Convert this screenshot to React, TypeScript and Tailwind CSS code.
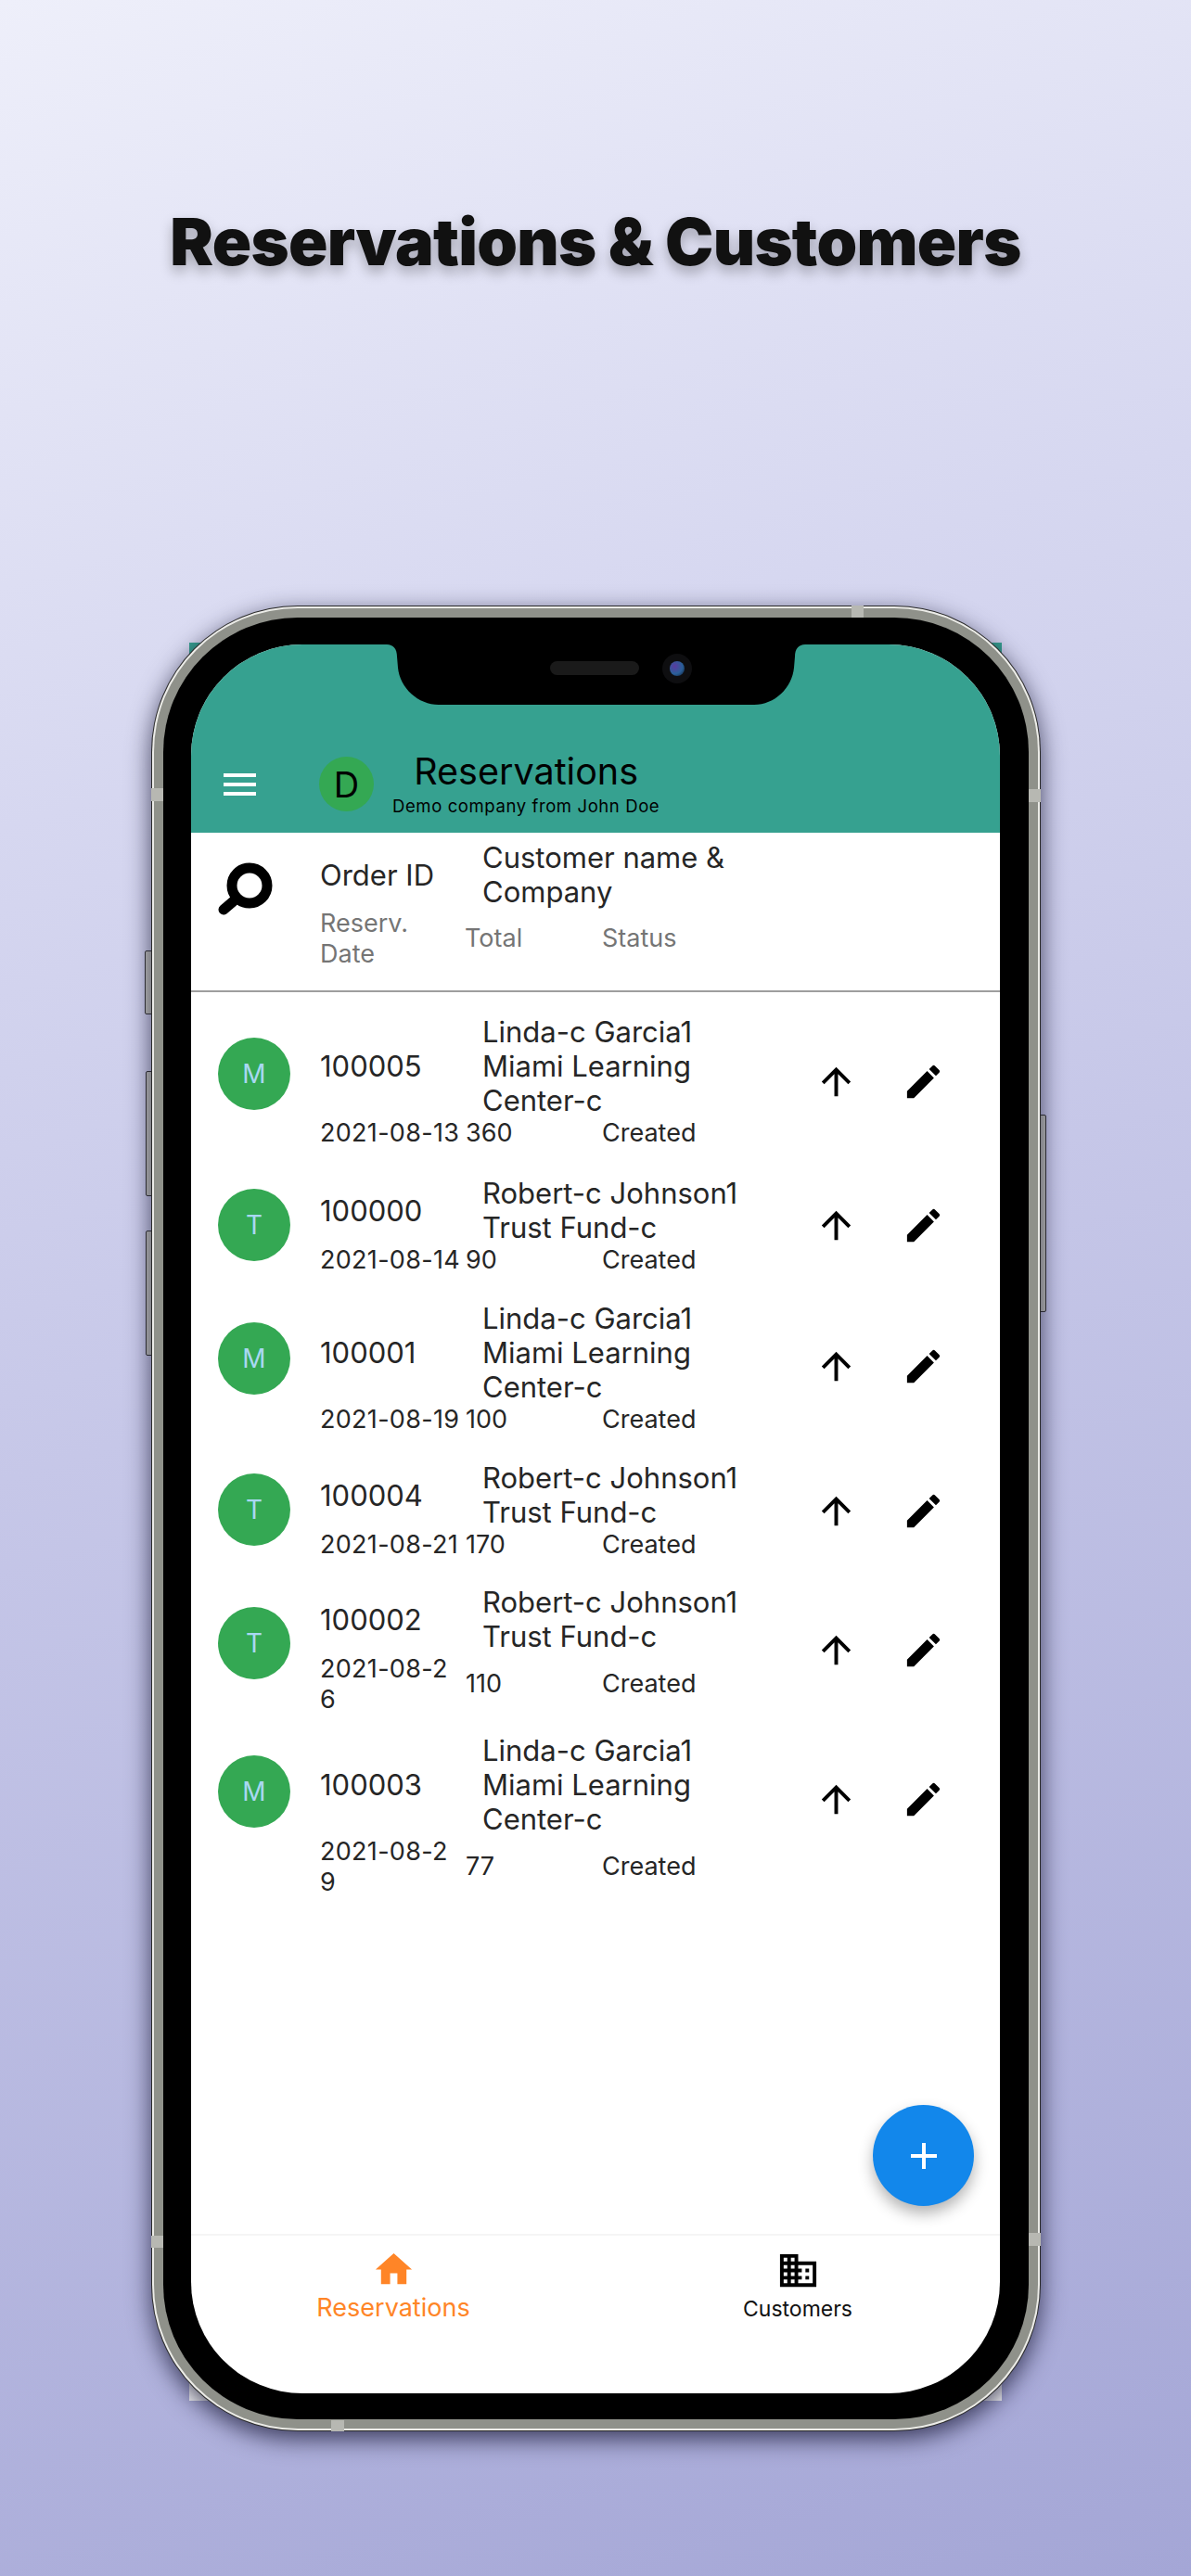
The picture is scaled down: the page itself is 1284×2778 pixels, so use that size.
const rows = [
  { id: '100005', avatar: 'M', names: ['Linda-c Garcia1', 'Miami Learning', 'Center-c'], date: ['2021-08-13'], total: '360', h: 'h-[174px]', am: 'mt-[25px]', im: 'mt-[49px]', nh: 'h-[111px]' },
  { id: '100000', avatar: 'T', names: ['Robert-c Johnson1', 'Trust Fund-c'], date: ['2021-08-14'], total: '90', h: 'h-[135px]', am: 'mt-[14px]', im: 'mt-[30px]', nh: 'h-[74px]' },
  { id: '100001', avatar: 'M', names: ['Linda-c Garcia1', 'Miami Learning', 'Center-c'], date: ['2021-08-19'], total: '100', h: 'h-[172px]', am: 'mt-[23px]', im: 'mt-[47px]', nh: 'h-[111px]' },
  { id: '100004', avatar: 'T', names: ['Robert-c Johnson1', 'Trust Fund-c'], date: ['2021-08-21'], total: '170', h: 'h-[134px]', am: 'mt-[14px]', im: 'mt-[31px]', nh: 'h-[74px]' },
  { id: '100002', avatar: 'T', names: ['Robert-c Johnson1', 'Trust Fund-c'], date: ['2021-08-2', '6'], total: '110', h: 'h-[160px]', am: 'mt-[24px]', im: 'mt-[47px]', nh: 'h-[74px]' },
  { id: '100003', avatar: 'M', names: ['Linda-c Garcia1', 'Miami Learning', 'Center-c'], date: ['2021-08-2', '9'], total: '77', h: 'h-[177px]', am: 'mt-[24px]', im: 'mt-[48px]', nh: 'h-[111px]' },
];

function Row({ r }: { r: (typeof rows)[number] }) {
  return (
    <div className={`flex items-start pl-[29px] ${r.h}`}>
      <div className={`flex h-[78px] w-[78px] shrink-0 items-center justify-center rounded-full bg-[#34a853] text-[28px] leading-none text-[#a9d8f2] ${r.am}`}>
        {r.avatar}
      </div>
      <div className="ml-[32px] w-[533px] shrink-0">
        <div className="flex items-center">
          <div className="w-[175px] shrink-0 text-[31px] leading-[37px] text-[#262626]">{r.id}</div>
          <div className={`flex flex-col justify-center text-[31px] leading-[37px] text-[#262626] ${r.nh}`}>
            {r.names.map((n) => (
              <div key={n}>{n}</div>
            ))}
          </div>
        </div>
        <div className="mt-[1px] flex items-center text-[27px] leading-[32.5px] text-[#262626]">
          <div className="w-[157px] shrink-0 tracking-[0.3px] whitespace-nowrap">
            {r.date.map((d) => (
              <div key={d}>{d}</div>
            ))}
          </div>
          <div className="w-[147px] shrink-0">{r.total}</div>
          <div>Created</div>
        </div>
      </div>
      <div className={`flex gap-[47px] ${r.im}`}>
        <svg viewBox="0 0 24 24" className="h-[47px] w-[47px]" fill="#000">
          <path d="M4 12l1.41 1.41L11 7.83V20h2V7.83l5.58 5.59L20 12l-8-8-8 8z" />
        </svg>
        <svg viewBox="0 0 24 24" className="h-[47px] w-[47px]" fill="#000">
          <path d="M3 17.25V21h3.75L17.81 9.94l-3.75-3.75L3 17.25zM20.71 7.04c.39-.39.39-1.02 0-1.41l-2.34-2.34c-.39-.39-1.02-.39-1.41 0l-1.83 1.83 3.75 3.75 1.83-1.83z" />
        </svg>
      </div>
    </div>
  );
}

export default function App() {
  return (
    <div className="min-h-[2778px] w-[1284px] overflow-hidden bg-[linear-gradient(162deg,#eeeffa_0%,#d6d7f0_28%,#c6c7e8_50%,#a4a6d6_100%)] font-['Inter','Liberation_Sans',sans-serif]">
      <div className="flex h-[653px] justify-center pt-[217px]">
        <h1 className="text-[70px] leading-[88px] font-black tracking-[-0.7px] whitespace-nowrap text-[#111] [text-shadow:0_7px_14px_rgba(0,0,0,0.28)]">
          Reservations &amp; Customers
        </h1>
      </div>

      <div className="relative ml-[163px] h-[1969px] w-[959px]">
        {/* screen picture corners poking out behind the frame */}
        <div className="absolute top-[40px] left-[41px] flex h-[1896px] w-[876px] flex-col">
          <div className="h-[200px] bg-[#36a190]" />
          <div className="flex-1 bg-white" />
        </div>

        {/* side buttons */}
        <div className="absolute top-[372px] -left-[7px] h-[69px] w-[8px] rounded-l-[2px] border border-[#333] bg-[#c5c6bf]" />
        <div className="absolute top-[502px] -left-[6px] h-[135px] w-[7px] rounded-l-[2px] border border-[#333] bg-[#c5c6bf]" />
        <div className="absolute top-[674px] -left-[6px] h-[135px] w-[7px] rounded-l-[2px] border border-[#333] bg-[#c5c6bf]" />
        <div className="absolute top-[549px] -right-[6px] h-[213px] w-[7px] rounded-r-[2px] border border-[#333] bg-[#c5c6bf]" />

        {/* frame */}
        <div className="relative h-full w-full rounded-[158px] bg-[#2b2b2b] p-px shadow-[0_8px_26px_rgba(20,20,50,0.75)]">
          <div className="h-full rounded-[157px] bg-[#ecece8] p-[2px]">
            <div className="h-full rounded-[155px] bg-[#8f918a] p-[10px]">
              <div className="relative h-full rounded-[145px] bg-black px-[30px] pt-[29px] pb-[29px]">
                <div className="relative flex h-[1886px] w-[872px] flex-col overflow-hidden rounded-[120px] bg-white">
                  {/* app bar */}
                  <div className="flex h-[203px] shrink-0 items-end bg-[#36a190] pb-[17px]">
                    <div className="flex items-center pl-[35px]">
                      <div className="flex w-[35px] flex-col gap-[6px]">
                        <div className="h-[4px] bg-white" />
                        <div className="h-[4px] bg-white" />
                        <div className="h-[4px] bg-white" />
                      </div>
                      <div className="ml-[68px] flex h-[59px] w-[59px] items-center justify-center rounded-full bg-[#34a853] text-[38px] leading-none text-black">
                        D
                      </div>
                      <div className="ml-[20px] flex flex-col items-center text-black">
                        <div className="text-[39.5px] leading-[44px]">Reservations</div>
                        <div className="mt-[3px] text-[18.5px] leading-[24px] tracking-[0.6px]">Demo company from John Doe</div>
                      </div>
                    </div>
                  </div>

                  {/* table header */}
                  <div className="flex h-[172px] shrink-0 items-start border-b-2 border-[#9e9e9e] pl-[29px]">
                    <svg viewBox="0 0 59 57" className="mt-[32px] h-[57px] w-[59px]" fill="none" stroke="#000">
                      <circle cx="34" cy="25" r="19" strokeWidth="11" />
                      <line x1="20" y1="39" x2="6" y2="51" strokeWidth="11" strokeLinecap="round" />
                    </svg>
                    <div className="ml-[51px] pt-[8px]">
                      <div className="flex items-center text-[31px] leading-[37px] text-[#262626]">
                        <div className="w-[175px]">Order ID</div>
                        <div className="w-[300px]">
                          <div>Customer name &amp;</div>
                          <div>Company</div>
                        </div>
                      </div>
                      <div className="flex items-center text-[27px] leading-[32.5px] text-[#757575]">
                        <div className="w-[156px]">
                          <div>Reserv.</div>
                          <div>Date</div>
                        </div>
                        <div className="w-[148px]">Total</div>
                        <div>Status</div>
                      </div>
                    </div>
                  </div>

                  {/* rows */}
                  <div className="flex-1 pt-[24px]">
                    {rows.map((r) => (
                      <Row key={r.id} r={r} />
                    ))}
                  </div>

                  {/* bottom nav */}
                  <div className="grid h-[172px] shrink-0 grid-cols-2 border-t-2 border-[#f5f5f5]">
                    <div className="flex flex-col items-center pt-[13px]">
                      <svg viewBox="0 0 24 24" className="h-[47px] w-[47px]" fill="#ff8527">
                        <path d="M10 20v-6h4v6h5v-8h3L12 3 2 12h3v8z" />
                      </svg>
                      <div className="mt-[2px] text-[27px] leading-[32px] text-[#ff8527]">Reservations</div>
                    </div>
                    <div className="flex flex-col items-center pt-[14px]">
                      <svg viewBox="0 0 24 24" className="h-[47px] w-[47px]" fill="#000">
                        <path d="M12 7V3H2v18h20V7H12zM6 19H4v-2h2v2zm0-4H4v-2h2v2zm0-4H4V9h2v2zm0-4H4V5h2v2zm4 12H8v-2h2v2zm0-4H8v-2h2v2zm0-4H8V9h2v2zm0-4H8V5h2v2zm10 12h-8v-2h2v-2h-2v-2h2v-2h-2V9h8v10zm-2-8h-2v2h2v-2zm0 4h-2v2h2v-2z" />
                      </svg>
                      <div className="mt-[3px] text-[23px] leading-[30px] text-[#111]">Customers</div>
                    </div>
                  </div>

                  {/* FAB */}
                  <div className="absolute right-[28px] bottom-[202px] flex h-[109px] w-[109px] items-center justify-center rounded-full bg-[#1287eb] shadow-[0_8px_16px_rgba(0,0,0,0.3)]">
                    <svg viewBox="0 0 28 28" className="h-[28px] w-[28px]" fill="#fff">
                      <path d="M12 0h4v12h12v4H16v12h-4V16H0v-4h12z" />
                    </svg>
                  </div>
                </div>

                {/* notch */}
                <svg viewBox="0 0 451 65" className="absolute top-[29px] left-[241px] h-[65px] w-[451px]" fill="#000">
                  <path d="M0 0C7 0 11 5 11 13L12 25C14 47 34 65 56 65H396C418 65 437 47 439 25L440 13C440 5 444 0 451 0Z" />
                </svg>
                <div className="absolute top-[47px] left-[417px] h-[15px] w-[96px] rounded-full bg-[#1a1a1a]" />
                <div className="absolute top-[39px] left-[538px] flex h-[32px] w-[32px] items-center justify-center rounded-full bg-[#0e0e10]">
                  <div className="h-[16px] w-[16px] rounded-full bg-[radial-gradient(circle_at_35%_35%,#5a3aa0,#2a5f98_55%,#0c1a30)]" />
                </div>
              </div>
            </div>
          </div>
        </div>

        {/* antenna bands */}
        <div className="absolute top-0 left-[755px] h-[13px] w-[13px] bg-[#b7b8b2]" />
        <div className="absolute top-[197px] left-0 h-[14px] w-[13px] bg-[#b7b8b2]" />
        <div className="absolute top-[198px] right-0 h-[14px] w-[13px] bg-[#b7b8b2]" />
        <div className="absolute top-[1758px] left-0 h-[13px] w-[13px] bg-[#b7b8b2]" />
        <div className="absolute top-[1755px] right-0 h-[14px] w-[13px] bg-[#b7b8b2]" />
        <div className="absolute bottom-0 left-[194px] h-[12px] w-[14px] bg-[#b7b8b2]" />
      </div>
    </div>
  );
}
